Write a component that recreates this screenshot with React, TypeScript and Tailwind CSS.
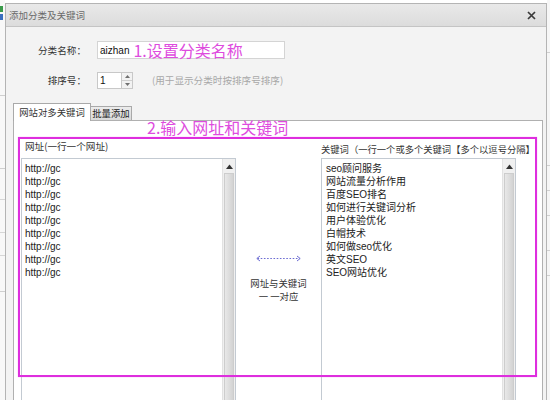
import React from "react";

const FONT = "[font-family:'Liberation_Sans','Noto_Sans_CJK_SC',sans-serif]";
const CJK = "[font-family:'Noto_Sans_CJK_SC','Liberation_Sans',sans-serif]";

const urls = Array.from({ length: 9 }, () => "http://gc");
const keywords = [
  "seo顾问服务",
  "网站流量分析作用",
  "百度SEO排名",
  "如何进行关键词分析",
  "用户体验优化",
  "白帽技术",
  "如何做seo优化",
  "英文SEO",
  "SEO网站优化",
];

function ScrollBar() {
  return (
    <div className="w-[13px] flex flex-col bg-[#f0f0f0] border-l border-[#e2e2e2]">
      <div className="h-[14px] flex items-center justify-center">
        <svg width="7" height="5" viewBox="0 0 7 5">
          <path d="M0 5 L3.5 0.5 L7 5 Z" fill="#333" />
        </svg>
      </div>
      <div className="flex-1 mx-[1px] bg-gradient-to-r from-[#e8e8e8] to-[#d3d3d3] border border-[#cdcdcd]" />
    </div>
  );
}

function ListBox({ lines, width, pl }: { lines: string[]; width: string; pl: string }) {
  return (
    <div className={`${width} h-[260px] flex bg-white border border-[#c3cad2]`}>
      <div className={`flex-1 ${pl} pt-[3px] text-[10px] leading-[13px] text-[#222] whitespace-nowrap overflow-hidden`}>
        {lines.map((l, i) => (
          <div key={i}>{l}</div>
        ))}
      </div>
      <ScrollBar />
    </div>
  );
}

export default function App() {
  return (
    <div className={`w-[550px] h-[400px] overflow-hidden flex bg-white ${FONT}`}>
      {/* background app left strip */}
      <div className="w-[5px] h-[400px] flex flex-col bg-[#f8f8f8]">
        <div className="h-[6px]" />
        <div className="h-[6px] w-[3px] bg-[#3a9a4a]" />
        <div className="h-[2px]" />
        <div className="h-[6px] w-[3px] bg-[#3a6fc0]" />
        <div className="h-[75px]" />
        <div className="h-px bg-[#cfcfcf]" />
        <div className="h-[72px]" />
        <div className="h-px bg-[#cfcfcf]" />
        <div className="h-[30px]" />
        <div className="h-px bg-[#d6d6d6]" />
        <div className="h-[32px]" />
        <div className="h-px bg-[#d6d6d6]" />
        <div className="h-[22px]" />
        <div className="h-px bg-[#d6d6d6]" />
        <div className="h-[35px]" />
        <div className="h-px bg-[#cfcfcf]" />
      </div>

      {/* dialog */}
      <div className="w-[542px] h-[430px] mt-[3px] flex flex-col border-l border-r border-t border-[#b4b4b4] bg-[#f3f3f3]">
        {/* title bar */}
        <div className="h-[23px] flex items-center justify-between pl-[3px] pr-[10px] bg-gradient-to-b from-[#e9e9e9] to-[#dcdcdc] border-b border-[#c4c4c4]">
          <span className={`text-[9.5px] text-[#6a6a6a] ${CJK}`}>添加分类及关键词</span>
          <svg width="9" height="9" viewBox="0 0 9 9">
            <path d="M1 1 L8 8 M8 1 L1 8" stroke="#3a3a3a" strokeWidth="1.7" />
          </svg>
        </div>

        {/* form rows */}
        <div className="pt-[14px] flex flex-col">
          <div className="flex items-center h-[18px]">
            <div className={`w-[80px] text-right text-[9.6px] text-[#333] ${CJK}`}>分类名称：</div>
            <div className="ml-[11px] w-[188px] h-[18px] flex items-center bg-white border border-[#d4d4d4] pl-[2px]">
              <span className="text-[10px] text-[#111]">aizhan</span>
              <span className={`ml-[4px] text-[16px] leading-[16px] text-[#de4cde] whitespace-nowrap ${CJK}`}>
                1.设置分类名称
              </span>
            </div>
          </div>
          <div className="flex items-center h-[17px] mt-[13px]">
            <div className={`w-[80px] text-right text-[9.6px] text-[#333] ${CJK}`}>排序号：</div>
            <div className="ml-[11px] w-[36px] h-[17px] flex bg-white border border-[#c8c8c8]">
              <div className="flex-1 pl-[2px] text-[10px] leading-[15px] text-[#111]">1</div>
              <div className="w-[11px] flex flex-col border-l border-[#c8c8c8] bg-[#f2f2f2]">
                <div className="flex-1 flex items-center justify-center border-b border-[#cfcfcf]">
                  <svg width="5" height="3" viewBox="0 0 5 3">
                    <path d="M0 3 L2.5 0 L5 3 Z" fill="#707070" />
                  </svg>
                </div>
                <div className="flex-1 flex items-center justify-center">
                  <svg width="5" height="3" viewBox="0 0 5 3">
                    <path d="M0 0 L2.5 3 L5 0 Z" fill="#707070" />
                  </svg>
                </div>
              </div>
            </div>
            <div className={`ml-[19px] text-[9.6px] text-[#a8a8a8] ${CJK}`}>(用于显示分类时按排序号排序)</div>
          </div>
        </div>

        {/* tabs */}
        <div className="mt-[14px] ml-[7px] flex items-end relative z-10">
          <div className={`w-[78px] h-[18px] -mb-px flex items-center justify-center bg-white border border-b-0 border-[#a9a9a9] text-[9.4px] text-[#333] ${CJK}`}>
            网站对多关键词
          </div>
          <div className={`w-[41px] h-[14px] flex items-center justify-center bg-gradient-to-b from-[#ececec] to-[#d9d9d9] border border-l-0 border-b-0 border-[#a9a9a9] text-[9.4px] text-[#222] ${CJK}`}>
            批量添加
          </div>
        </div>

        {/* tab panel */}
        <div className="ml-[7px] w-[530px] flex-1 relative bg-white border border-[#b0b0b0]">
          <div className="flex items-start pl-[7px] pt-[19px]">
            {/* url column */}
            <div className="flex flex-col">
              <div className={`pl-[4px] h-[13px] leading-[13px] mb-[5px] text-[9.6px] text-[#333] ${CJK}`}>
                网址(一行一个网址)
              </div>
              <ListBox lines={urls} width="w-[215px]" pl="pl-[3px]" />
            </div>

            {/* middle */}
            <div className="w-[85px] flex flex-col items-center pt-[115px]">
              <svg width="45" height="7" viewBox="0 0 45 7">
                <path d="M4 1 L0.8 3.5 L4 6" stroke="#6c6cd2" strokeWidth="1" fill="none" />
                <path d="M1.5 3.5 L43.5 3.5" stroke="#6c6cd2" strokeWidth="1" strokeDasharray="1.6 1.6" />
                <path d="M41 1 L44.2 3.5 L41 6" stroke="#6c6cd2" strokeWidth="1" fill="none" />
              </svg>
              <div className={`mt-[15px] text-center text-[9.4px] leading-[13px] text-[#333] ${CJK}`}>
                <div>网址与关键词</div>
                <div>一 一对应</div>
              </div>
            </div>

            {/* keyword column */}
            <div className="flex flex-col">
              <div className={`pt-[3px] h-[16px] leading-[13px] mb-[2px] text-[9.3px] text-[#333] whitespace-nowrap ${CJK}`}>
                关键词（一行一个或多个关键词【多个以逗号分隔】
              </div>
              <ListBox lines={keywords} width="w-[195px]" pl="pl-[4px]" />
            </div>
          </div>

          {/* annotation overlays */}
          <div className={`absolute left-[133px] top-[-2px] text-[16px] leading-[17px] text-[#de4cde] whitespace-nowrap ${CJK}`}>
            2.输入网址和关键词
          </div>
          <div className="absolute left-[4px] top-[16px] w-[519px] h-[240px] border-2 border-[#de2ede] shadow-[0_0_1px_#f09af0]" />
        </div>
      </div>

      {/* background app right strip */}
      <div className="w-[3px] h-[400px] flex flex-col bg-[#f6f6f6]">
        <div className="h-[52px]" />
        <div className="h-px bg-[#d0d0d0]" />
        <div className="h-[112px]" />
        <div className="h-px bg-[#d0d0d0]" />
        <div className="h-[24px]" />
        <div className="h-px bg-[#d0d0d0]" />
        <div className="h-[24px]" />
        <div className="h-px bg-[#d0d0d0]" />
        <div className="h-[34px]" />
        <div className="h-px bg-[#d0d0d0]" />
        <div className="h-[24px]" />
        <div className="h-px bg-[#d0d0d0]" />
      </div>
    </div>
  );
}
